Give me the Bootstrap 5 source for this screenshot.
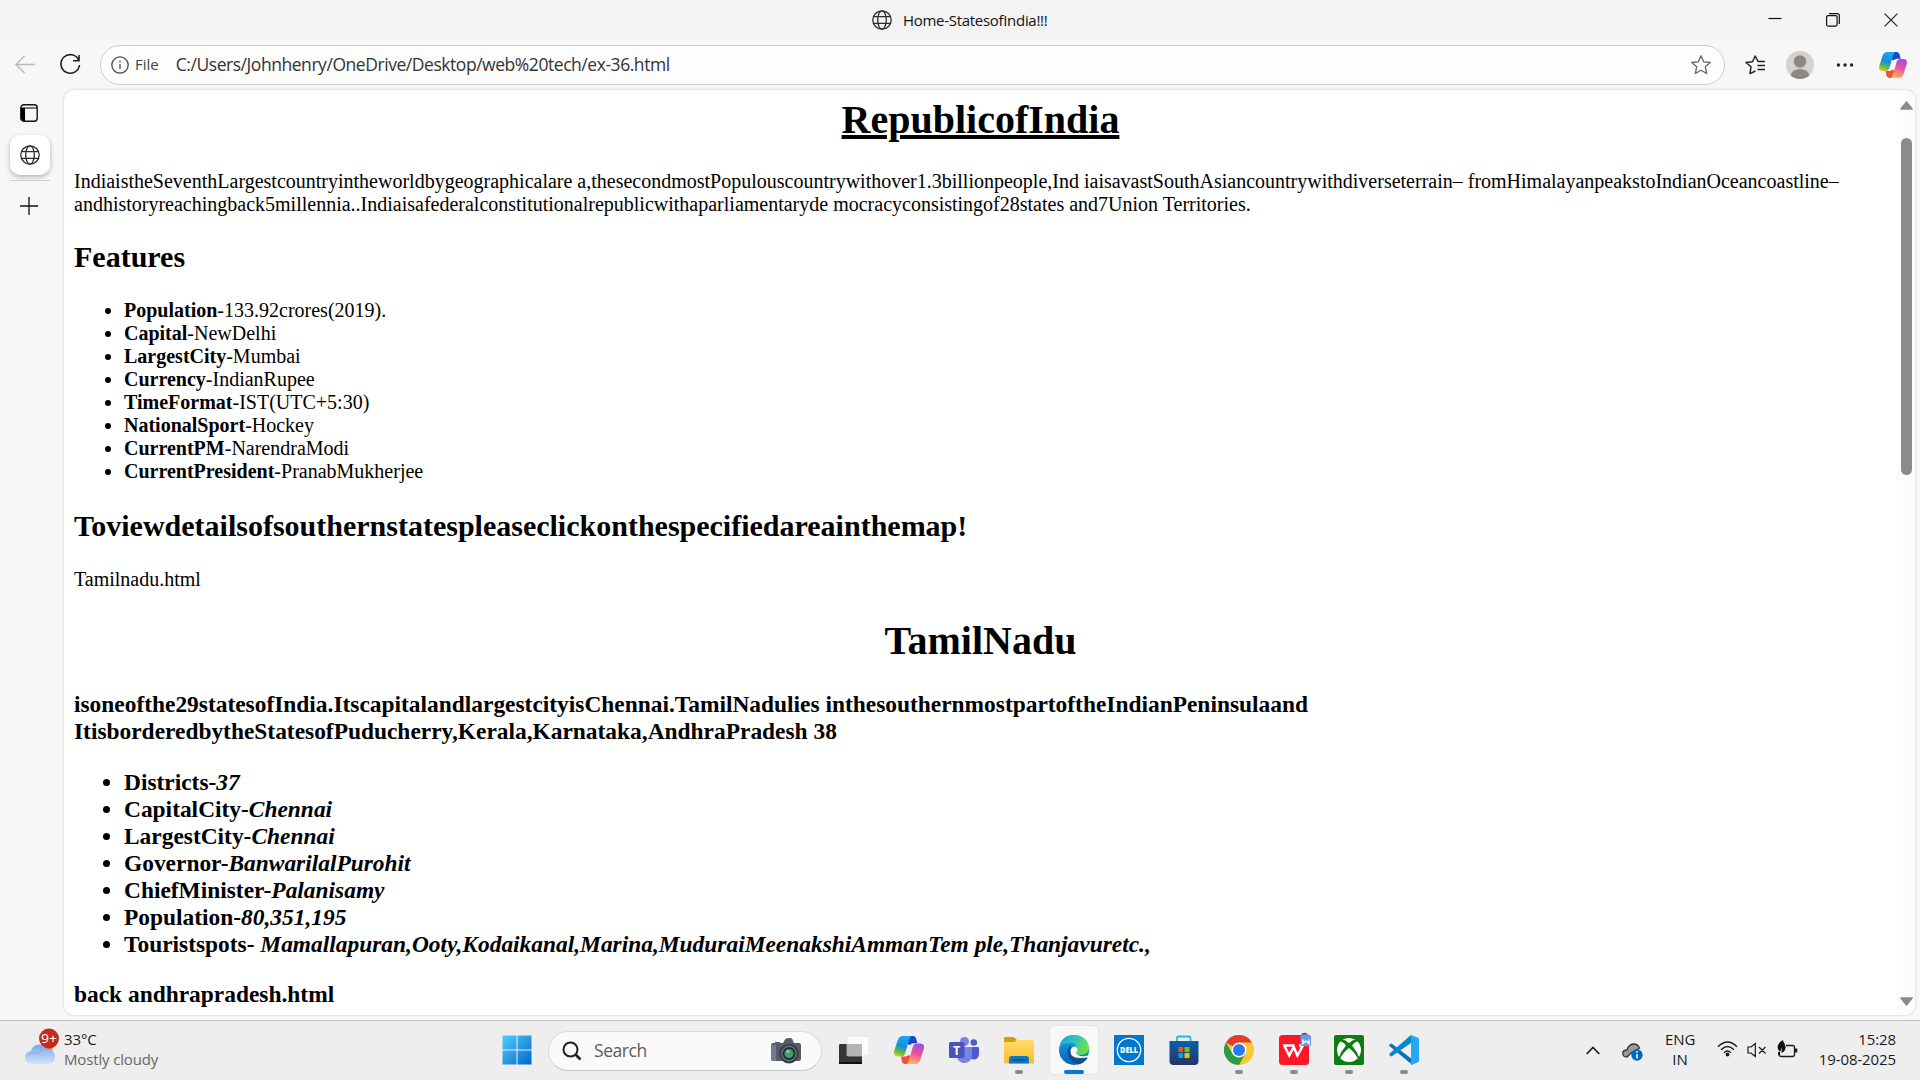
<!DOCTYPE html>
<html lang="en">
<head>
<meta charset="utf-8">
<title>Home-StatesofIndia!!!</title>
<link href="https://cdn.jsdelivr.net/npm/bootstrap@5.3.0/dist/css/bootstrap.min.css" rel="stylesheet">
<style>
body{width:1920px;height:1080px;overflow:hidden;background:#f7f7f7;font-family:"Open Sans","Noto Sans",sans-serif;color:#1b1b1b}
svg{display:block;flex:none}
.titlebar{height:40px;background:#f3f3f3;padding-left:872px;padding-right:22px}
.tab-title{font-size:15px;letter-spacing:-.3px;color:#111;margin-left:11px;white-space:nowrap}
.winbtns{gap:44px}
.toolbar{height:50px;padding-left:14px;padding-right:13px}
.address{height:40px;width:1625px;margin-left:18px;border:1px solid #cdcdcd;border-width:1px 1px 1.5px;border-radius:20px;background:#fdfdfd;padding:0 13px 0 10px;white-space:nowrap}
.scheme{font-size:15px;letter-spacing:0;margin-left:6px;margin-top:-1px;color:#444}
.url{font-size:17.5px;letter-spacing:-.45px;margin-left:17px;margin-top:-1px;color:#333}
.profile{margin-left:20px}
.more{margin-left:22px}
.workarea{height:930px}
.rail{width:64px;padding-top:14px}
.railtab{width:40px;height:40px;margin:13px 0 0 -4px;background:#fff;border-radius:10px;box-shadow:0 2px 5px rgba(0,0,0,.28)}
.railrule{width:40px;height:1px;background:#cfcfcf;margin:5px 0 16px -4px}
.viewport-pane{width:1851px;height:925px;background:#fff;border-radius:10px;box-shadow:0 0 2px 1px #e2e2e2;overflow:hidden}
.page{width:1833px;padding:7px 10px 0;font-family:"Liberation Serif",serif;font-size:20px;line-height:23px;color:#000;white-space:nowrap}
.page h1{font-size:40px;line-height:46px;font-weight:700;margin:0 0 26.8px;color:#000}
.page h2{font-size:30px;line-height:34px;font-weight:700;margin:24px 0 25px;color:#000}
.page h3{font-size:23.42px;line-height:27px;font-weight:700;margin:0 0 23.4px;color:#000}
.page ul{padding-left:50px;margin:0}
.page ul+h2{margin-top:25.8px}
.page p{margin:0}
.page .linkname{margin-bottom:27.8px}
.states{font-size:23.42px;line-height:27px;font-weight:700}
.states p{margin-top:23.4px}
.scroller{width:18px;background:#fcfcfc;padding:11px 0 9px}
.thumb{width:11px;height:337px;border-radius:6px;background:#8b8b8b;margin-top:28px}
.taskbar{height:60px;background:#eee;border-top:1px solid #bdbdbd}
.weather{width:489px;padding-left:24px;padding-bottom:4px}
.weather div,.clock{font-size:15px;line-height:20px;letter-spacing:-.1px;white-space:nowrap}
.weather .forecast{color:#666;letter-spacing:-.15px}
.clock{margin-top:-3px}
.searchbox{width:274px;height:40px;margin:0 4.5px 0 4px;border:1px solid #dcdcdc;border-bottom-color:#c8c8c8;border-radius:20px;background:#fafafa;padding:0 20px 0 13px}
.searchbox span{font-size:17.5px;letter-spacing:-.45px;color:#5c5c5c;margin-left:12px}
.app{width:55px;height:59px;padding-top:14px}
.app::after{content:"";width:8px;height:4px;border-radius:2px;margin-top:5px;background:transparent}
.running::after{background:#8a8a8a}
.active{position:relative;z-index:0}
.active::before{content:"";position:absolute;z-index:-1;left:3px;top:5px;width:48px;height:48px;border-radius:5px;background:#f8f8f8;box-shadow:0 0 1px 1px #e4e4e4}
.active::after{width:20px;background:#0078d4}
.tray{padding-right:24px}
.lang{width:30px;margin-left:22px}
.datetime{width:90px;margin-left:8px}
</style>
<script src="https://cdn.jsdelivr.net/npm/bootstrap@5.3.0/dist/js/bootstrap.bundle.min.js"></script>
</head>
<body class="d-flex flex-column">
<svg width="0" height="0" class="position-absolute">
<defs>
<linearGradient id="cpA" x1=".3" y1="0" x2="0" y2="1"><stop offset="0" stop-color="#1ba4ee"/><stop offset=".4" stop-color="#168ee0"/><stop offset=".68" stop-color="#54b65a"/><stop offset="1" stop-color="#ffd500"/></linearGradient>
<linearGradient id="cpB" x1=".7" y1="0" x2=".4" y2="1"><stop offset="0" stop-color="#a04be8"/><stop offset=".5" stop-color="#f0529a"/><stop offset="1" stop-color="#ffb45e"/></linearGradient>
<linearGradient id="cloudG" x1="0" y1="0" x2="0" y2="1"><stop offset="0" stop-color="#7da6ea"/><stop offset="1" stop-color="#cfe4fb"/></linearGradient>
<linearGradient id="winG" x1="0" y1="0" x2="1" y2="1"><stop offset="0" stop-color="#4fd0ff"/><stop offset="1" stop-color="#0067c8"/></linearGradient>
<linearGradient id="foldG" x1="0" y1="0" x2="0" y2="1"><stop offset="0" stop-color="#ffdc6e"/><stop offset="1" stop-color="#fbbd24"/></linearGradient>
<linearGradient id="edgeT" x1="0" y1="0" x2="1" y2=".3"><stop offset="0" stop-color="#1aa0dc"/><stop offset=".5" stop-color="#2ac0cb"/><stop offset="1" stop-color="#6be04a"/></linearGradient>
<linearGradient id="edgeL" x1="0" y1="0" x2="0" y2="1"><stop offset="0" stop-color="#1c9fe2"/><stop offset="1" stop-color="#0a64b8"/></linearGradient>
<linearGradient id="storeG" x1="0" y1="0" x2="0" y2="1"><stop offset="0" stop-color="#0a5fae"/><stop offset="1" stop-color="#233760"/></linearGradient>
<symbol id="globe" viewBox="0 0 20 20"><g fill="none" stroke="#2b2b2b" stroke-width="1.3"><circle cx="10" cy="10" r="9.2"/><ellipse cx="10" cy="10" rx="4.3" ry="9.2"/><path d="M1.7 6.6h16.6M1.7 13.4h16.6"/></g></symbol>
<symbol id="copilot" viewBox="0 0 30 28"><path d="M14 0h5q2.500 0 3.200 3l1.100 4.200H19.500q-2.500 0-3.500 1.800L13 8Z" fill="#1748cf"/><path d="M7 20.500h4.500q2.500-.3 3.500-1.800L16.500 21 15 28h-4Q8.500 28 7.800 25Z" fill="#f0503c"/><path d="M9 0h8.500Q16 .8 15 4L11.200 17q-1 3.500-4 3.500H4Q-1.500 20.500.5 14L3.800 4Q5.200 0 9 0Z" fill="url(#cpA)"/><path d="M21 28h-8.500q1.500-.8 2.500-4l3.800-13q1-3.500 4-3.500H26q5.500 0 3.500 6.500l-3.300 10Q24.800 28 21 28Z" fill="url(#cpB)"/></symbol>
</defs>
</svg>

<header class="titlebar d-flex align-items-center flex-shrink-0">
<svg width="20" height="20"><use href="#globe"/></svg>
<span class="tab-title">Home-StatesofIndia!!!</span>
<div class="winbtns d-flex align-items-center ms-auto">
<svg width="14" height="14" viewBox="0 0 14 14"><path d="M.5 5.500h13" stroke="#111" stroke-width="1.2"/></svg>
<svg width="14" height="14" viewBox="0 0 14 14" fill="none" stroke="#111" stroke-width="1.2"><rect x=".6" y="2.600" width="10.500" height="10.500" rx="1.500"/><path d="M3 .7h8.200q2.100 0 2.100 2v8.200"/></svg>
<svg width="14" height="14" viewBox="0 0 14 14"><path d="m.6.600 12.800 12.800m0-12.800L.6 13.400" stroke="#222" stroke-width="1.200"/></svg>
</div>
</header>

<nav class="toolbar d-flex align-items-center flex-shrink-0">
<svg width="22" height="20" viewBox="0 0 22 20" fill="none" stroke="#b9b9b9" stroke-width="1.400"><path d="M21 9.500H2M10.500 1 2 9.500l8.500 8.500"/></svg>
<svg width="24" height="24" viewBox="0 0 24 24" fill="none" stroke="#202020" stroke-width="1.600" style="margin-left:22px"><path d="M20.700 7A9.300 9.300 0 1 0 21.500 12M21 2v5.800h-6"/></svg>
<div class="address d-flex align-items-center">
<svg width="18" height="18" viewBox="0 0 18 18" fill="none" stroke="#4a4a4a" stroke-width="1.300"><circle cx="9" cy="9" r="8.200"/><path d="M9 8v5M9 4.700v1.500"/></svg>
<span class="scheme">File</span><span class="url">C:/Users/Johnhenry/OneDrive/Desktop/web%20tech/ex-36.html</span>
<svg class="ms-auto" width="20" height="20" viewBox="0 0 20 20" fill="none" stroke="#666" stroke-width="1.300" stroke-linejoin="round"><path d="m10 .8 2.700 6 6.500.7-4.900 4.300 1.400 6.700-5.700-3.300-5.700 3.300 1.400-6.700L.8 7.500l6.500-.7Z"/></svg>
</div>
<svg width="21" height="20" viewBox="0 0 21 20" fill="none" stroke="#222" stroke-width="1.500" stroke-linejoin="round" style="margin-left:20px"><path d="M10.500 16 5 18.600l1-6.800L1 7.500l6.500-.8L10.200 1 13 6.500h7M12.500 10.500H20M12.500 14.500H20"/></svg>
<svg width="28" height="28" viewBox="0 0 28 28" class="profile"><circle cx="14" cy="14" r="14" fill="#d4d2cf"/><circle cx="14" cy="10.500" r="6.200" fill="#8b8683"/><path d="M4.500 24.200Q7 18 14 18t9.500 6.200A14 14 0 0 1 4.500 24.200" fill="#8b8683"/></svg>
<svg width="18" height="6" viewBox="0 0 18 6" class="more" fill="#222"><circle cx="2.400" cy="3" r="1.700"/><circle cx="9" cy="3" r="1.700"/><circle cx="15.600" cy="3" r="1.700"/></svg>
<svg width="28" height="26" class="ms-auto"><use href="#copilot"/></svg>
</nav>

<main class="workarea d-flex flex-shrink-0">
<aside class="rail d-flex flex-column align-items-center">
<svg width="18" height="18" viewBox="0 0 18 18" style="margin-left:-6px"><rect x=".8" y=".8" width="16.400" height="16.400" rx="3" fill="none" stroke="#111" stroke-width="1.400"/><path d="M1 4h4v13H3.500L1 15ZM1 3.600h16v1H1Z" fill="#000"/></svg>
<div class="railtab d-flex align-items-center justify-content-center"><svg width="20" height="20"><use href="#globe"/></svg></div>
<div class="railrule"></div>
<svg width="18" height="18" viewBox="0 0 18 18" style="margin-left:-6px"><path d="M9 0v18M0 9h18" stroke="#111" stroke-width="1.300"/></svg>
</aside>
<section class="viewport-pane d-flex">
<article class="page">
<h1 class="text-center"><u>RepublicofIndia</u></h1>
<p>IndiaistheSeventhLargestcountryintheworldbygeographicalare a,thesecondmostPopulouscountrywithover1.3billionpeople,Ind iaisavastSouthAsiancountrywithdiverseterrain– fromHimalayanpeakstoIndianOceancoastline–<br>andhistoryreachingback5millennia..Indiaisafederalconstitutionalrepublicwithaparliamentaryde mocracyconsistingof28states and7Union Territories.</p>
<h2>Features</h2>
<ul>
<li><b>Population</b>-133.92crores(2019).</li>
<li><b>Capital</b>-NewDelhi</li>
<li><b>LargestCity</b>-Mumbai</li>
<li><b>Currency</b>-IndianRupee</li>
<li><b>TimeFormat</b>-IST(UTC+5:30)</li>
<li><b>NationalSport</b>-Hockey</li>
<li><b>CurrentPM</b>-NarendraModi</li>
<li><b>CurrentPresident</b>-PranabMukherjee</li>
</ul>
<h2>Toviewdetailsofsouthernstatespleaseclickonthespecifiedareainthemap!</h2>
<p class="linkname">Tamilnadu.html</p>
<h1 class="text-center">TamilNadu</h1>
<h3>isoneofthe29statesofIndia.ItscapitalandlargestcityisChennai.TamilNadulies inthesouthernmostpartoftheIndianPeninsulaand<br>ItisborderedbytheStatesofPuducherry,Kerala,Karnataka,AndhraPradesh 38</h3>
<div class="states">
<ul>
<li>Districts-<i>37</i></li>
<li>CapitalCity-<i>Chennai</i></li>
<li>LargestCity-<i>Chennai</i></li>
<li>Governor-<i>BanwarilalPurohit</i></li>
<li>ChiefMinister-<i>Palanisamy</i></li>
<li>Population-<i>80,351,195</i></li>
<li>Touristspots- <i>Mamallapuran,Ooty,Kodaikanal,Marina,MuduraiMeenakshiAmmanTem ple,Thanjavuretc.,</i></li>
</ul>
<p>back andhrapradesh.html</p>
</div>
</article>
<div class="scroller d-flex flex-column align-items-center">
<svg width="13" height="9" viewBox="0 0 13 9"><path d="M6.500 1 12 8H1Z" fill="#8b8b8b" stroke="#8b8b8b" stroke-width="1.600" stroke-linejoin="round"/></svg>
<div class="thumb"></div>
<svg class="mt-auto" width="13" height="9" viewBox="0 0 13 9"><path d="M6.500 8 12 1H1Z" fill="#8b8b8b" stroke="#8b8b8b" stroke-width="1.600" stroke-linejoin="round"/></svg>
</div>
</section>
</main>

<footer class="taskbar d-flex align-items-center flex-shrink-0">
<div class="weather d-flex align-items-center">
<svg width="36" height="38" viewBox="0 0 36 38" style="margin-top:-4px"><circle cx="23" cy="19" r="6" fill="#f5852a"/><path d="M7.500 36Q1 35.500 1 29.500T7 23q1.500-6.500 8.500-6.500 5.500 0 8 5Q31 20.500 31 29q0 6.500-7 7Z" fill="url(#cloudG)"/><path d="M4 27q5-5 10-1 2-5 8-4.500" fill="none" stroke="#87ace8" stroke-width="1"/><circle cx="25" cy="10.500" r="10" fill="#c42b1c"/><text x="25" y="15" text-anchor="middle" font-size="13" textLength="16" lengthAdjust="spacingAndGlyphs" fill="#fff">9+</text></svg>
<div style="margin-left:4px"><div>33°C</div><div class="forecast">Mostly cloudy</div></div>
</div>
<div class="app d-flex flex-column align-items-center"><svg width="30" height="30" viewBox="0 0 30 30"><path d="M.5.500h14v14H.5Zm15 0h14v14h-14Zm-15 15h14v14H.5Zm15 0h14v14h-14Z" fill="url(#winG)"/></svg></div>
<div class="searchbox d-flex align-items-center">
<svg width="20" height="20" viewBox="0 0 20 20" fill="none" stroke="#222" stroke-width="2"><circle cx="8.500" cy="8.500" r="7"/><path d="m13.500 13.500 5 5" stroke-width="2.600"/></svg>
<span>Search</span>
<svg class="ms-auto" width="30" height="26" viewBox="0 0 30 26"><path d="M2 5h2V4h5v1h3l2-3.500Q15 0 17 0h2.500q1.500 0 2 1.500L23 5h5q2 0 2 2v14q0 2-2 2H2q-2 0-2-2V7q0-2 2-2" fill="#565d68"/><path d="M0 7h5v16H2q-2 0-2-2Z" fill="#737b88"/><circle cx="18" cy="15.500" r="10" fill="#3c434c"/><circle cx="18" cy="15.500" r="7" fill="#242a30" stroke="#7d8790"/><circle cx="18" cy="15.500" r="4.500" fill="#3f9d70"/><circle cx="17" cy="13.500" r="1.500" fill="#8fd0ab"/></svg>
</div>
<div class="app d-flex flex-column align-items-center"><svg width="30" height="30" viewBox="0 0 30 30"><rect y="9" width="23" height="20" rx="1" fill="#353533"/><path d="M0 27h23v2H0Z" fill="#111"/><rect x="8" y="1" width="22" height="20" rx="1" fill="#fff" fill-opacity=".8" stroke="#ddd" stroke-width=".7"/><path d="M8 9h15v12H8Z" fill="#b5b5b3"/></svg></div>
<div class="app d-flex flex-column align-items-center"><svg width="30" height="30" viewBox="0 0 30 30"><use href="#copilot" y="1" width="30" height="28"/></svg></div>
<div class="app d-flex flex-column align-items-center"><svg width="30" height="30" viewBox="0 0 30 30"><circle cx="15.500" cy="6.500" r="4.500" fill="#7b83eb"/><circle cx="24.800" cy="7.500" r="3.300" fill="#5059c9"/><path d="M21 12h8q1 0 1 1v6.500q-1 5-5 5-3 0-4-2Z" fill="#5059c9"/><path d="M8 12h15v8q-1 8-7.500 8-6 0-7.500-6Z" fill="#7b83eb"/><rect x="0" y="7" width="15.500" height="16" rx="1.500" fill="#4b53bc"/><text x="7.700" y="19.500" font-size="12.500" font-weight="700" text-anchor="middle" fill="#fff">T</text></svg></div>
<div class="app running d-flex flex-column align-items-center"><svg width="30" height="30" viewBox="0 0 30 30"><path d="M0 3.500Q0 2 1.500 2H9q1.500 0 2.500 1.500L13 5v7H0Z" fill="#dd9c06"/><path d="M0 7h10l3-2h15.500Q30 5 30 6.500V27q0 1.500-1.500 1.500h-27Q0 28.500 0 27Z" fill="url(#foldG)"/><path d="M5 28.500V24q0-3 3-3h14q3 0 3 3v4.500Z" fill="#1475c4"/><path d="M8.500 25h13" stroke="#074a86" stroke-width="1.300"/></svg></div>
<div class="app active d-flex flex-column align-items-center"><svg width="30" height="30" viewBox="0 0 30 30"><circle cx="15" cy="15" r="15" fill="url(#edgeL)"/><path d="M.3 13Q2 0 15 0q14 1 15 13-.5 6.500-8 7-5.500 0-5.500-2.500 2-1.500 1.500-4.500Q16.500 8 10.500 8 4 8 .3 13" fill="url(#edgeT)"/><path d="M11 11q-4 4-1.500 10.500T19 29.500q6-1 9.500-6.500-1-1-3 0-9 2.500-13.500-4-2-4 .500-7.200Z" fill="#114f91"/><path d="M12 14q1-3 4-2.500 3 1 2.300 4.500-2 2-.5 3.200 4 3.300 9.200 1.500 3-1 1.700 1.300-2.200 1-6.200 1Q14 23 12 19.500 11 16 12 14" fill="#f8f8f8"/></svg></div>
<div class="app d-flex flex-column align-items-center"><svg width="30" height="30" viewBox="0 0 30 30"><path d="M0 0h30v30H0Z" fill="#0076ce"/><circle cx="15" cy="15" r="11.700" fill="none" stroke="#fff" stroke-width="1.300"/><text x="15" y="18" text-anchor="middle" font-size="8" font-weight="800" textLength="18" lengthAdjust="spacingAndGlyphs" fill="#fff">DELL</text></svg></div>
<div class="app d-flex flex-column align-items-center"><svg width="30" height="30" viewBox="0 0 30 30"><path d="M8 7V3q0-1.500 1.500-1.500h10.500q1.500 0 1.500 1.500v4" fill="none" stroke="#23b5ee" stroke-width="1.800"/><path d="M.5 6H29.500V26q0 4-4 4H4.500q-4 0-4-4Z" fill="url(#storeG)"/><path d="M9.500 12H14v5H9.500Z" fill="#f25022"/><path d="M15.500 12h5v5h-5Z" fill="#7fba00"/><path d="M9.500 18H14v5H9.500Z" fill="#00a4ef"/><path d="M15.500 18h5v5h-5Z" fill="#ffb900"/></svg></div>
<div class="app running d-flex flex-column align-items-center"><svg width="30" height="30" viewBox="0 0 30 30"><circle cx="15" cy="15" r="15" fill="#fcc934"/><path d="M15 15 2 7.500A15 15 0 0 1 28 7.500H15Z" fill="#e33b2e"/><path d="M2 7.500A15 15 0 0 0 15 30l6.500-11.300L15 15 8.500 18.700Z" fill="#2b9948"/><circle cx="15" cy="15" r="7.500" fill="#fff"/><circle cx="15" cy="15" r="6" fill="#2f78ed"/></svg></div>
<div class="app running d-flex flex-column align-items-center"><svg width="34" height="30" viewBox="-2 0 34 30" overflow="visible"><rect width="30" height="30" rx="3.500" fill="#ff1627"/><path d="M4 10.500h11.500M5.200 10.500l5 10 4.500-8.500 3.700 8.500 5.500-10H20" fill="none" stroke="#fff" stroke-width="2.500"/><path d="M22 0q1-3 5-2l3 1.500Z" fill="#4a586e"/><rect x="21.500" y="0" width="10.500" height="11" rx="1.500" fill="#679af3"/><path d="M24 4.500v4l3-2.500 3 2.500v-4" fill="none" stroke="#fff" stroke-width="1.400"/></svg></div>
<div class="app running d-flex flex-column align-items-center"><svg width="30" height="30" viewBox="0 0 30 30"><rect width="30" height="30" rx="2" fill="#107c10"/><circle cx="15" cy="15" r="12" fill="#fff"/><path d="M15 8Q10 3.500 7 5q-1.500 0 0 1.500 3 1 5 4Q7 16 4.500 23.500l1.500.500Q9 17.500 15 13q6 4.500 9 11l1.500-.500Q23 16 18 10.500q2-3 5-4 1.500-1.500 0-1.500-3-1.500-8 3" fill="#107c10"/></svg></div>
<div class="app running d-flex flex-column align-items-center"><svg width="30" height="30" viewBox="0 0 30 30"><path d="m2.500 8.500 21 16V30L.7 11.200q-1-.8 0-1.700Z" fill="#0a6fb8"/><path d="M2.500 21.500.7 20.200q-1-.8 0-1.700L22 0v8Z" fill="#0088d1"/><path d="m22 0 6.500 2.500Q30 3.200 30 4.500v21q0 1.300-1.500 2L22 30Z" fill="#27a7ef"/></svg></div>

<div class="tray d-flex align-items-center ms-auto">
<svg width="14" height="9" viewBox="0 0 14 9" fill="none" stroke="#1b1b1b" stroke-width="1.700"><path d="m.7 8 6.300-6.500L13.300 8"/></svg>
<svg width="21" height="19" viewBox="0 0 21 19" style="margin-left:22px;margin-top:3px"><path d="M5 14Q.8 14 .8 10.500T5 7q1.500-5.500 6.500-6 4-.2 6 4L9 10Z" fill="#9b9b9b" stroke="#333" stroke-width="1.300"/><circle cx="15" cy="12" r="5.700" fill="#0067c0"/><path d="M15 11v4.500M15 8v1.700" stroke="#fff" stroke-width="1.500"/></svg>
<div class="clock lang text-center">ENG<br>IN</div>
<svg width="21" height="16" viewBox="0 0 21 16" style="margin-left:22px;margin-top:-3px" fill="none" stroke="#1b1b1b" stroke-width="1.400"><path d="M1 5.800q9.500-9.500 19 0M4 8.800q6.500-6.500 13 0M7 11.700q3.500-3.300 7 0"/><circle cx="10.500" cy="13.500" r="1.200" fill="#1b1b1b"/></svg>
<svg width="20" height="16" viewBox="0 0 20 16" style="margin-left:9px;margin-top:-1px" fill="none" stroke="#1b1b1b" stroke-width="1.200"><path d="M1 5h3l4.300-3.500v13L4 11H1ZM12 5l6.500 6.500m0-6.500L12 11.500"/></svg>
<svg width="21" height="18" viewBox="0 0 21 18" style="margin-left:10px;margin-top:-4px"><path d="M9 5.500h6.500q2 0 2 2v7q0 2-2 2h-11q-2 0-2.500-1.500" fill="none" stroke="#1b1b1b" stroke-width="1.300"/><path d="M18 8.500h2.300v4H18Z" fill="#1b1b1b"/><path d="M5.500 0Q0 4 .7 8q.5 2.500 2.500 4L5 7l-.5 6Q9 11 8.500 6.500 8 3.500 5.500 0M1 12h2v3H1Z" fill="#111"/></svg>
<div class="clock datetime text-end">15:28<br>19-08-2025</div>
</div>
</footer>
</body>
</html>
